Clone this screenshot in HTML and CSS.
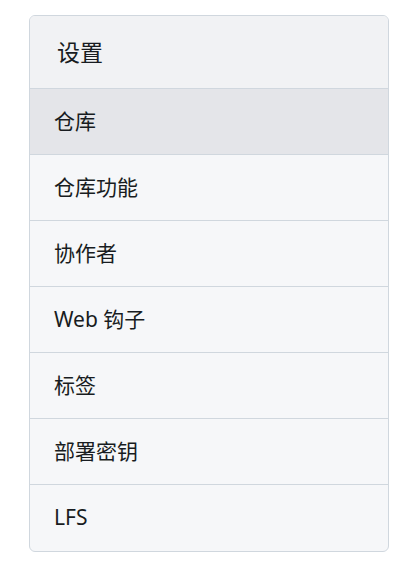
FILE: index.html
```html
<!DOCTYPE html>
<html lang="zh-CN">
<head>
<meta charset="utf-8">
<link rel="stylesheet" href="styles.css">
</head>
<body>
<div class="menu">
  <div class="menu-header">设置</div>
  <a class="menu-item active">仓库</a>
  <a class="menu-item">仓库功能</a>
  <a class="menu-item">协作者</a>
  <a class="menu-item">Web 钩子</a>
  <a class="menu-item">标签</a>
  <a class="menu-item">部署密钥</a>
  <a class="menu-item">LFS</a>
</div>
</body>
</html>
```
FILE: styles.css
```css
html, body {
  margin: 0;
  padding: 0;
  background: #ffffff;
}
body {
  padding: 15px 15px 0 29px;
  font-family: "Noto Sans", "Noto Sans CJK SC", sans-serif;
  color: #181c21;
}
.menu {
  width: 360px;
  box-sizing: border-box;
  border: 1px solid #d0d7de;
  border-radius: 6px;
  overflow: hidden;
  background: #f6f7f9;
  display: flex;
  flex-direction: column;
}
.menu-header {
  height: 73px;
  box-sizing: border-box;
  display: flex;
  align-items: center;
  padding-left: 27px;
  padding-bottom: 2px;
  font-size: 23px;
  background: #f1f2f4;
  border-bottom: 1px solid #d0d7de;
}
.menu-item {
  height: 66px;
  box-sizing: border-box;
  display: flex;
  align-items: center;
  padding-left: 24px;
  padding-bottom: 3px;
  font-size: 21px;
  color: #181c21;
  text-decoration: none;
  border-bottom: 1px solid #d0d7de;
}
.menu-item:last-child {
  border-bottom: none;
}
.menu-item.active {
  background: #e4e5e9;
}
```
